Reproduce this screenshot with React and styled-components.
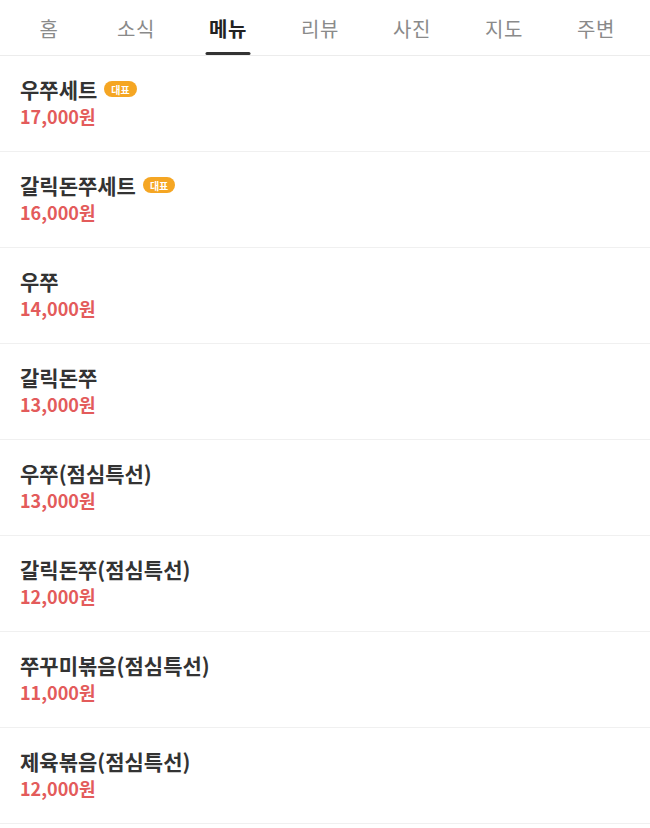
import React from 'react';
import styled, { createGlobalStyle } from 'styled-components';

const GlobalStyle = createGlobalStyle`
  body {
    margin: 0;
    background: #fff;
    font-family: "Noto Sans CJK KR", "Noto Sans", sans-serif;
  }
`;

const Page = styled.div`
  width: 650px;
  background: #fff;
`;

const TabBar = styled.nav`
  display: grid;
  grid-template-columns: 82px repeat(6, 1fr);
  height: 55px;
  padding: 0 8px;
  border-bottom: 1px solid #ececec;
  box-sizing: border-box;
  height: 56px;
`;

const Tab = styled.div`
  position: relative;
  display: flex;
  align-items: center;
  justify-content: center;
  padding-top: 2px;
  font-size: 20px;
  font-weight: ${p => (p.$active ? 700 : 400)};
  color: ${p => (p.$active ? '#222' : '#8a8a8a')};
  letter-spacing: 0.5px;

  &::after {
    content: '';
    display: ${p => (p.$active ? 'block' : 'none')};
    position: absolute;
    left: 50%;
    transform: translateX(-50%);
    bottom: 0;
    width: 45px;
    height: 3px;
    border-radius: 2px;
    background: #333;
  }
`;

const MenuList = styled.ul`
  list-style: none;
  margin: 0;
  padding: 0;
`;

const MenuItem = styled.li`
  height: 96px;
  padding: 19px 20px 0;
  box-sizing: border-box;
  border-bottom: 1px solid #f0f0f0;
`;

const NameRow = styled.div`
  display: flex;
  align-items: center;
  gap: 7px;
  height: 28px;
`;

const Name = styled.span`
  font-size: 21px;
  font-weight: 700;
  color: #333;
`;

const Badge = styled.span`
  display: inline-flex;
  align-items: center;
  justify-content: center;
  height: 16px;
  padding: 0 7px;
  border-radius: 8px;
  background: #f5a623;
  color: #fff;
  font-size: 10px;
  font-weight: 700;
`;

const Price = styled.div`
  margin-top: 1px;
  font-size: 18px;
  font-weight: 700;
  line-height: 24px;
  color: #e35b5b;
`;

const tabs = ['홈', '소식', '메뉴', '리뷰', '사진', '지도', '주변'];

const menus = [
  { name: '우쭈세트', price: '17,000원', badge: true },
  { name: '갈릭돈쭈세트', price: '16,000원', badge: true },
  { name: '우쭈', price: '14,000원' },
  { name: '갈릭돈쭈', price: '13,000원' },
  { name: '우쭈(점심특선)', price: '13,000원' },
  { name: '갈릭돈쭈(점심특선)', price: '12,000원' },
  { name: '쭈꾸미볶음(점심특선)', price: '11,000원' },
  { name: '제육볶음(점심특선)', price: '12,000원' },
];

const App = () => (
  <Page>
    <GlobalStyle />
    <TabBar>
      {tabs.map(t => (
        <Tab key={t} $active={t === '메뉴'}>{t}</Tab>
      ))}
    </TabBar>
    <MenuList>
      {menus.map(m => (
        <MenuItem key={m.name}>
          <NameRow>
            <Name>{m.name}</Name>
            {m.badge && <Badge>대표</Badge>}
          </NameRow>
          <Price>{m.price}</Price>
        </MenuItem>
      ))}
    </MenuList>
  </Page>
);

export default App;
